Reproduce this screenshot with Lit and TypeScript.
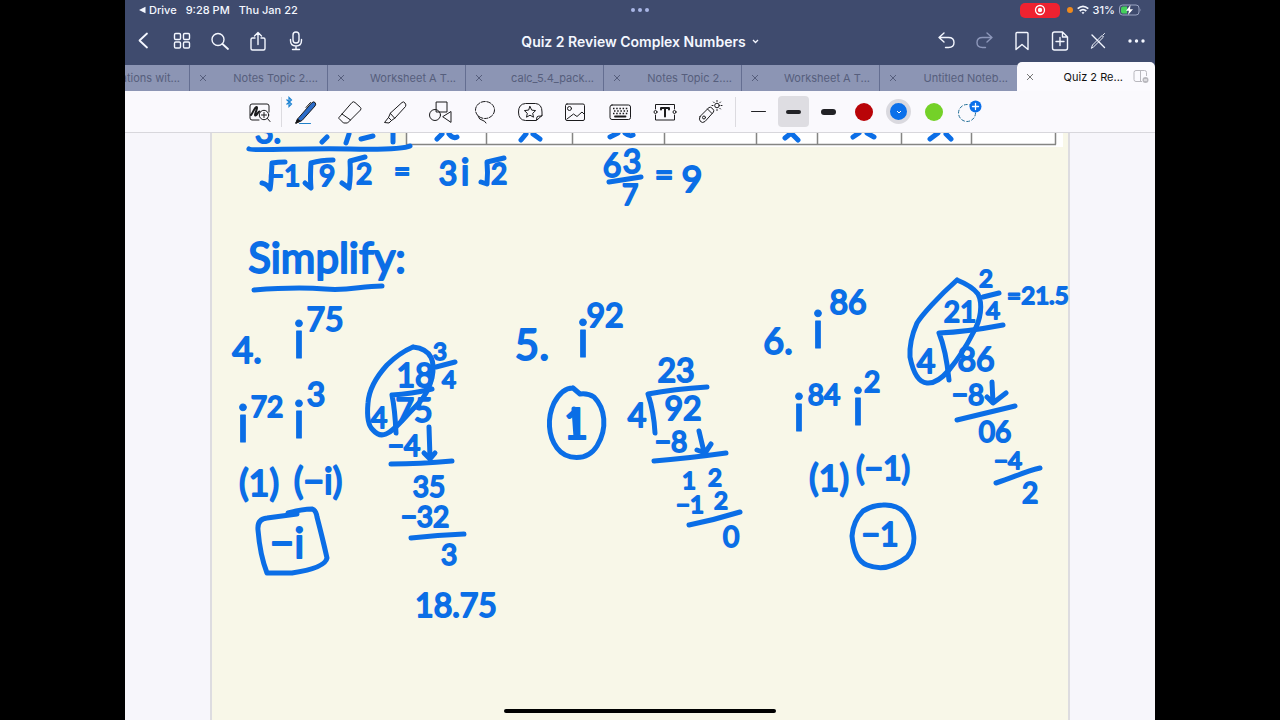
import { LitElement, html, svg, css } from "lit";
import { customElement, state } from "lit/decorators.js";
import { classMap } from "lit/directives/class-map.js";

const icon = (body: unknown, size = 28) => html`
  <svg class="icon" width=${size} height=${size} viewBox="0 0 ${size} ${size}" aria-hidden="true">${body}</svg>
`;

const back = icon(svg`<path d="M17 6.5 9.5 13.5 17 20.5" stroke-width="1.8"/>`);
const grid = icon(svg`
  <rect x="6.5" y="6.5" width="6" height="6" rx="1.2"/><rect x="15.5" y="6.5" width="6" height="6" rx="1.2"/>
  <rect x="6.5" y="15" width="6" height="6" rx="1.2"/><rect x="15.5" y="15" width="6" height="6" rx="1.2"/>`);
const search = icon(svg`<circle cx="12" cy="12.5" r="6"/><path d="M16.5 17 22 22" stroke-width="1.8"/>`);
const share = icon(svg`<path d="M11 11H8.500q-1.5 0-1.5 1.5v9Q7 23 8.500 23h11q1.500 0 1.500-1.500v-9Q21 11 19.500 11H17M14 17.500V5.500M10.500 9L14 5.500 17.500 9"/>`);
const mic = icon(svg`<rect x="11" y="5" width="6" height="11" rx="3"/><path d="M8.500 12.500v1q0 5.500 5.500 5.500t5.500-5.500v-1M14 19v3.500M10.500 22.500h7"/>`);
const undo = icon(svg`<path d="M12 6 7 10.500l5 4.500M7 10.500h9.500q5.500 0 5.500 5t-5.500 5H13.500"/>`);
const redo = icon(svg`<path d="M17 6l5 4.500-5 4.500M22 10.500h-9.500q-5.500 0-5.500 5t5.500 5H15.500"/>`);
const bookmark = icon(svg`<path d="M8 6.500q0-1 1-1h10q1 0 1 1v16l-6-5-6 5z"/>`);
const addPage = icon(svg`<path d="M16.500 5H8.500q-2 0-2 2v14q0 2 2 2h11q2 0 2-2V10zM16.500 5v5h5M14 10.500v8M10 14.500h8"/>`);
const penCross = icon(svg`<path d="M8 8 20.500 20.500"/><path d="M7.500 21l1-3 9.500-9.500 1.500 1.500-9.500 9.500zM19 8l1.500-1.500" stroke-width="1"/>`);
const more = icon(svg`<g fill="currentColor" stroke="none"><circle cx="8" cy="14" r="1.7"/><circle cx="14.500" cy="14" r="1.7"/><circle cx="21" cy="14" r="1.7"/></g>`);

const zoomWindow = icon(svg`
  <path d="M14 22H7q-2 0-2-2V8q0-2 2-2h15q2 0 2 2v6"/>
  <path d="M6 17c2-2 3.500-8 5.500-8s-3 9-1 8.500 2-3.500 4-4" stroke-width="2"/>
  <circle cx="19" cy="17" r="4.700"/><path d="M19 14.500v5M16.500 17h5M22.500 20.500l2.500 3"/>`);
const pen = icon(svg`
  <path d="M7 20.500 20.500 5q2-2 3.500-.5t0 3.500L11 22.500 5 25z" fill="#2b6cc9"/>
  <path d="M19.500 4.500l-4.500 5"/><path d="M5 25l1.500-4 2.500 2z" fill="#111"/>
  <path d="M8.500 25.500h11" stroke="#2080c8"/>`);
const eraser = icon(svg`<path d="M3 19.500 16 4.500q1.500-1.500 3 0l5.500 5q1 1 0 2.500L11.500 25H7.500L3 20.500zM6 16l8.500 6"/>`);
const marker = icon(svg`<path d="M9.500 15 21 4.500q1.500-1.500 3 .5t.5 3.500L14 20zM9.500 15l-2 4.500 3 3L14 20M7.500 19.500l-4 5 4.500.5 2.500-2.500"/>`);
const shapes = icon(svg`<rect x="10.500" y="4" width="10.500" height="10"/><circle cx="9" cy="17" r="5.500"/><path d="M17 18.500 25 13.500v10.500z"/>`);
const lasso = icon(svg`<ellipse cx="14" cy="12" rx="9.500" ry="8.500" stroke-dasharray="4 1.500"/><path d="M7 18q1 4 5 4.500 2 .5 3 2.500"/>`);
const sticker = icon(svg`
  <path d="M20 22.500H9.500Q2.500 22 2.500 14T9.500 5.500h10q6.500.5 6.500 8.500v4q-5 0-5 .5z"/><path d="M21 22l5-4.500"/>
  <path d="M14 8.500l1.700 3.600 3.900.5-2.900 2.700.8 3.900-3.500-2-3.500 2 .8-3.900-2.900-2.700 3.900-.5z"/>`);
const picture = icon(svg`<rect x="4.500" y="6" width="19" height="16.500" rx="1.500"/><circle cx="8.500" cy="10.500" r="2"/><path d="M6 21l6.500-5 3.500 2.500 5-4.500 2.500 2.500"/>`);
const keyboard = icon(svg`
  <rect x="4" y="7" width="20.500" height="14.500" rx="2"/>
  <path d="M7 10.500h15M8 13h14M7 15.500h15" stroke-width="1.500" stroke-dasharray="1.500 1.700" stroke-linecap="butt"/>
  <path d="M9 18.500h10.500" stroke-width="1.800"/>`);
const textBox = icon(svg`
  <path d="M4.500 11V6.500h19V11M4.500 17v5h19v-5"/><circle cx="4.500" cy="14" r="1.500"/><circle cx="23.500" cy="14" r="1.500"/>
  <path d="M10 11.500V10h8v1.500M14 10v8.500" stroke-width="2"/>`);
const laser = icon(svg`
  <path d="M4 18.500 13 9.500q1.500-1 3.500 1t1 3.500L9 23.500q-2.500 2-4.500 0t-.5-5zM11.500 11l4.500 4.500"/><circle cx="8" cy="19.500" r="1.500"/>
  <circle cx="21" cy="7.500" r="2.300"/><path d="M21 2.500v1M21 11.500v1M16 7.500h1M25 7.500h1M17.500 4l.7.700M24.500 4l-.7.700M24.500 11l-.7-.7"/>`);

const tabs = ["Equations wit...", "Notes Topic 2....", "Worksheet A T...", "calc_5.4_pack...", "Notes Topic 2....", "Worksheet A T...", "Untitled Noteb...", "Quiz 2 Re..."];

type Mark = [text: string, centre: number, baseline: number, size: string];

const marks: Mark[] = [
  ["3.", 268, 143, "m"],
  ["−1", 284, 186, "s"], ["9", 327, 186, "s"], ["2", 364, 184, "s"], ["=", 402, 181, "s"],
  ["3", 448, 185, "m"], ["i", 465, 185, "l"], ["2", 499, 184, "s"],
  ["6", 612, 177, "m"], ["3", 632, 173, "m"], ["7", 630, 205, "s"], ["=", 664, 186, "m"], ["9", 692, 192, "l"],
  ["Simplify:", 327, 273, "xl"],
  ["4.", 247, 363, "l"], ["i", 299, 358, "xxl"], ["75", 325, 331, "m"],
  ["i", 243, 442, "xxl"], ["72", 267, 417, "s"], ["i", 299, 438, "xxl"], ["3", 316, 406, "m"],
  ["(1)", 259, 496, "l"], ["(−i)", 318, 494, "l"], ["−i", 287, 558, "xl"],
  ["18", 415, 387, "m"], ["3", 440, 360, "xs"], ["4", 449, 388, "xs"],
  ["4", 379, 428, "s"], ["75", 414, 422, "m"], ["−4", 404, 456, "s"],
  ["35", 429, 497, "s"], ["−32", 425, 527, "s"], ["3", 449, 565, "s"], ["18.75", 456, 617, "m"],
  ["5.", 532, 360, "xl"], ["i", 583, 357, "xxl"], ["92", 605, 327, "m"], ["1", 576, 439, "xl"],
  ["23", 676, 382, "m"], ["4", 637, 427, "m"], ["92", 683, 420, "m"], ["−8", 671, 452, "s"],
  ["1", 689, 489, "xs"], ["2", 715, 486, "xs"], ["−1", 690, 513, "xs"], ["2", 721, 509, "xs"], ["0", 731, 547, "s"],
  ["6.", 778, 354, "l"], ["i", 818, 348, "xxl"], ["86", 848, 314, "m"],
  ["i", 799, 431, "xxl"], ["84", 824, 405, "s"], ["i", 858, 425, "xxl"], ["2", 872, 392, "s"],
  ["(1)", 829, 491, "l"], ["(−1)", 883, 480, "m"], ["−1", 880, 546, "m"],
  ["21", 960, 322, "s"], ["2", 986, 287, "xs"], ["4", 993, 319, "xs"], ["=", 1014, 304, "xs"], ["21.5", 1045, 304, "xs"],
  ["4", 926, 373, "m"], ["86", 976, 371, "m"], ["−8", 968, 405, "s"],
  ["06", 995, 442, "s"], ["−4", 1008, 469, "xs"], ["2", 1030, 503, "s"],
];

// Rules, radicals, loops, arrows and answer frames drawn between the written marks.
const strokes = [
  "M249 149C252 151 300 148 350 149S408 147 410 146",
  "M327 137 322 142M349 134 346 143M361 139 373 136M393 133V142",
  "M437 139l5-5M449 134q4 5 8 3M521 140l5-6M533 134l7 5M610 137l8-4M625 133q5 4 8 2M785 138l5-4M792 134l6 6M853 137l6-4M867 133l7 4M930 139l8-6M946 134l5 5",
  "M262 183q5 1 8 6 1-3 2-26 6-1 13-1", "M305 183q2 2 6 5-1-10 0-25 10-3 22-3",
  "M342 183l7 5q2-12 1-27l15-4", "M481 182l6 2q1-12 0-22l17-4",
  "M609 182 641 177",
  "M254 290C280 288 300 287 325 289S360 286 382 286",
  "M436 367 455 362",
  "M396 433Q395 410 392 395 411 394 432 389",
  "M413 347Q399 353 387 365C377 376 369 388 368 403Q366 424 373 430 379 437 386 434C394 431 402 420 417 405Q428 394 432 378C435 363 433 349 413 347",
  "M429 427 430 458M424 453 430 459 435 453M391 464Q420 464 452 461",
  "M411 538Q438 535 464 534",
  "M297 514 288 513Q302 509 312 509 316 510 317 517 323 540 327 558 325 568 292 573L267 573Q260 555 258 530 257 519 267 518L297 514",
  "M573 388Q562 388 554 403C547 418 548 436 557 448S587 462 597 446C608 428 605 408 594 397Q588 393 580 394L573 388",
  "M574 409 576 437",
  "M655 433Q654 412 648 394 674 389 707 387",
  "M699 431 704 452M697 450 705 453 711 444M654 461C680 459 697 457 726 453",
  "M689 525Q714 520 740 512",
  "M883 505Q873 505 863 511 853 521 852 536 854 560 867 565 887 573 907 557C918 544 914 528 907 516Q899 504 883 505",
  "M983 297 999 293",
  "M949 380Q946 350 939 333 966 332 1003 325",
  "M957 280C938 297 922 315 917 323Q909 341 910 357 915 382 927 383 937 384 949 370 963 353 973 333C981 320 983 304 978 294Q972 286 957 280",
  "M992 382 993 403M987 397 993 403 1006 393M957 420Q986 413 1015 406",
  "M996 483C1015 477 1023 472 1040 468",
];

@customElement("note-page")
class NotePage extends LitElement {
  static styles = css`
    :host { display: block; flex: 1; min-height: 0; background: #f7f6fb; overflow: hidden; }
    .sheet { display: block; width: 100%; height: 100%; }
    .paper { fill: #f8f7e8; }
    .edge { stroke: #dddce0; stroke-width: 2; }
    .cells { fill: #fff; }
    .lines { fill: none; stroke: #858583; stroke-width: 1.5; }
    .strokes { fill: none; stroke: #0b6ee6; stroke-width: 5; stroke-linecap: round; stroke-linejoin: round; }
    .mark {
      font-family: Lato, "Open Sans", sans-serif; fill: #0b6ee6; stroke: #0b6ee6; stroke-width: 2;
      stroke-linejoin: round; text-anchor: middle;
    }
    .xs { font-size: 24px; }
    .s { font-size: 28px; }
    .m { font-size: 32px; }
    .l { font-size: 36px; }
    .xl { font-size: 42px; }
    .xxl { font-size: 52px; stroke-width: 1; }
  `;
  render() {
    return html`
      <svg class="sheet" viewBox="125 133 1030 587" preserveAspectRatio="xMidYMin slice" role="img" aria-label="Handwritten notes">
        <rect class="paper" x="211" y="120" width="857" height="620" />
        <path class="edge" d="M211 120V740M1069 120V740" />
        <rect class="cells" x="406" y="120" width="657" height="27" />
        <path class="lines" d="M406.5 120V144.5M486.5 120V144.5M572.5 120V144.5M664.5 120V144.5M756.5 120V144.5M817.5 120V144.5M901.5 120V144.5M971.5 120V144.5M1055.5 120V144.5M406 144.5H1056" />
        <g class="strokes">${strokes.map((d) => svg`<path d=${d} />`)}</g>
        ${marks.map(([t, x, y, size]) => svg`<text class="mark ${size}" x=${x} y=${y}>${t}</text>`)}
      </svg>
    `;
  }
}

@customElement("app-root")
class AppRoot extends LitElement {
  @state() private tool = 1;
  @state() private activeTab = 7;

  static styles = css`
    :host { display: flex; justify-content: center; height: 100vh; background: #000; font-family: Inter, "Liberation Sans", sans-serif; }
    * { box-sizing: border-box; }
    button { appearance: none; border: 0; padding: 0; margin: 0; background: none; color: inherit; font: inherit; cursor: pointer; display: flex; align-items: center; justify-content: center; }
    .icon { display: block; fill: none; stroke: currentColor; stroke-width: 1.4; stroke-linecap: round; stroke-linejoin: round; flex: none; }
    .screen { position: relative; display: flex; flex-direction: column; height: 100%; aspect-ratio: 103 / 72; max-width: 100%; overflow: hidden; background: #f7f6fb; }
    .top { background: #3f4b6e; color: #f4f7ff; }
    .status { display: grid; grid-template-columns: 1fr auto 1fr; align-items: center; height: 20px; padding: 0 13px; font-size: 11px; font-weight: 500; }
    .left { display: flex; gap: 9px; align-items: center; }
    .back-app { display: flex; gap: 3px; align-items: center; }
    .right { display: flex; gap: 4px; align-items: center; justify-content: flex-end; }
    .dots { color: #a9b6e6; }
    .record { width: 40px; height: 15px; border-radius: 5px; background: #ee2230; color: #fff; }
    .mic-dot { width: 6px; height: 6px; border-radius: 50%; background: #f08a1c; margin-left: 3px; }
    .nav { display: grid; grid-template-columns: 1fr auto 1fr; align-items: center; height: 45px; padding-bottom: 3px; }
    .group { display: flex; }
    .group.end { justify-content: flex-end; }
    .nav-button { width: 38px; height: 40px; }
    .dim { color: #8d97ba; }
    .title { gap: 6px; font-size: 14px; font-weight: 600; }
    .tabs { display: flex; justify-content: flex-end; height: 26px; background: #3f4b6e; }
    .tab { flex: none; display: flex; align-items: center; width: 138px; height: 26px; padding: 0 9px 0 9px; background: #8c95b4; border-left: 1px solid #646e91; color: #565e7c; font-size: 11px; }
    .tab.active { height: 29px; align-self: flex-end; background: #fbfafe; color: #111; border-radius: 5px 5px 0 0; border-left: 0; padding-right: 6px; }
    .close { width: 8px; height: 20px; }
    .tab.active .close { color: #777; }
    .name { flex: 1; justify-content: flex-end; white-space: nowrap; }
    .split { color: #b9b8be; margin-left: 10px; }
    .tools { display: flex; align-items: center; justify-content: center; height: 42px; padding-right: 58px; background: #faf9fd; border-bottom: 1px solid #d8d7dc; color: #1b1b1d; }
    .tools .icon { stroke-width: 1; }
    .tool { position: relative; width: 45px; height: 36px; }
    .bluetooth { position: absolute; left: 3px; top: 2px; color: #1b82d2; }
    .rule { width: 1px; height: 30px; background: #dcdbe0; }
    .rule.gap { margin: 0 5px 0 3px; }
    .option { width: 35px; height: 36px; }
    .picked { width: 31px; height: 31px; margin: 0 2px; border-radius: 4px; background: #dedde2; }
    .line { width: 15px; border-radius: 3px; background: #222226; }
    .thin { height: 1px; }
    .mid { height: 4px; }
    .thick { height: 6px; }
    .swatch { width: 18px; height: 18px; border-radius: 50%; }
    .red { background: #b90408; }
    .green { background: #74d128; }
    .blue { display: flex; align-items: center; justify-content: center; width: 25px; height: 25px; border: 4px solid #dad9df; border-radius: 50%; background: #0b70ea; color: #fff; }
    .home { position: absolute; bottom: 7px; left: 50%; width: 272px; height: 4px; margin-left: -136px; border-radius: 2px; background: #000; }
  `;

  render() {
    const navLeft = [["Back", back], ["Library", grid], ["Search", search], ["Share", share], ["Record audio", mic]];
    const navRight = [["Undo", undo], ["Redo", redo], ["Bookmark", bookmark], ["Add page", addPage], ["Editing mode", penCross], ["More", more]];
    const tools = [["Zoom window", zoomWindow], ["Pen", pen], ["Eraser", eraser], ["Highlighter", marker], ["Shapes", shapes], ["Lasso", lasso], ["Stickers", sticker], ["Image", picture], ["Keyboard", keyboard], ["Text", textBox], ["Laser pointer", laser]];
    return html`
      <div class="screen">
        <header class="top">
          <div class="status">
            <div class="left">
              <span class="back-app"><svg width="8" height="8" viewBox="0 0 8 8" fill="currentColor" aria-hidden="true"><path d="M1 4 7.500.800v6.400z"/></svg>Drive</span>
              <span>9:28 PM</span><span>Thu Jan 22</span>
            </div>
            <svg class="dots" width="18" height="6" viewBox="0 0 18 6" fill="currentColor" aria-hidden="true"><circle cx="2" cy="3" r="2"/><circle cx="9" cy="3" r="2"/><circle cx="16" cy="3" r="2"/></svg>
            <div class="right">
              <button class="record" aria-label="Recording">
                <svg width="12" height="12" viewBox="0 0 12 12" aria-hidden="true"><circle cx="6" cy="6" r="4.500" fill="none" stroke="#fff" stroke-width="1.300"/><circle cx="6" cy="6" r="2.200" fill="#fff"/></svg>
              </button>
              <span class="mic-dot"></span>
              <svg width="12" height="10" viewBox="0 0 12 10" fill="none" stroke="currentColor" stroke-width="1.700" aria-hidden="true"><path d="M.7 3.700q5.300-4.800 10.600 0M2.700 6q3.300-2.800 6.600 0"/><path d="M4.500 7.500q1.500-1.200 3 0L6 9.300z" fill="currentColor" stroke="none"/></svg>
              <span>31%</span>
              <svg width="23" height="12" viewBox="0 0 23 12" aria-hidden="true"><rect x=".5" y="1" width="19.500" height="10" rx="3" fill="none" stroke="#9ba5c3"/><path d="M4 2.500h4v7H4q-2 0-2-2v-3q0-2 2-2z" fill="#44d05c"/><path d="M21.500 4.500q1.300 1.500 0 3z" fill="#9ba5c3"/><path d="M11.500 1 7 6.700h3L9 11l5-5.700h-3z" fill="#fff"/></svg>
            </div>
          </div>
          <nav class="nav">
            <div class="group">${navLeft.map(([n, i]) => html`<button class="nav-button" aria-label=${n}>${i}</button>`)}</div>
            <button class="title">Quiz 2 Review Complex Numbers
              <svg width="7" height="5" viewBox="0 0 7 5" fill="none" stroke="currentColor" stroke-width="1.300" aria-hidden="true"><path d="M1 1l2.500 2.500L6 1"/></svg>
            </button>
            <div class="group end">${navRight.map(([n, i]) => html`<button class=${classMap({ "nav-button": true, dim: n === "Redo" })} aria-label=${n}>${i}</button>`)}</div>
          </nav>
        </header>
        <div class="tabs">
          ${tabs.map((name, i) => html`
            <div class=${classMap({ tab: true, active: i === this.activeTab })}>
              <button class="close" aria-label="Close tab">
                <svg width="8" height="8" viewBox="0 0 8 8" stroke="currentColor" aria-hidden="true"><path d="M1 1l6 6M7 1 1 7"/></svg>
              </button>
              <button class="name" @click=${() => (this.activeTab = i)}>${name}</button>
              ${i === 7 ? html`<button class="split" aria-label="Split view">
                <svg width="16" height="14" viewBox="0 0 16 14" fill="none" stroke="currentColor" aria-hidden="true"><path d="M9 11.500H3q-2 0-2-2v-7q0-2 2-2h8.500q2 0 2 2V6M7.500.500v11"/><circle cx="12.500" cy="10" r="3" fill="currentColor" stroke="none"/><path d="M11 10h3" stroke="#fff"/></svg>
              </button>` : ""}
            </div>`)}
        </div>
        <div class="tools" role="toolbar" aria-label="Drawing tools">
          ${tools.map(([n, i], k) => html`
            <button class="tool" aria-label=${n} aria-pressed=${k === this.tool} @click=${() => (this.tool = k)}>
              ${i}${k === 1 ? html`<svg class="bluetooth" width="8" height="12" viewBox="0 0 8 12" fill="none" stroke="currentColor" stroke-width="1.200" aria-hidden="true"><path d="M1.500 3.500 6.500 8 4 10.500v-9L6.500 4l-5 4.500"/></svg>` : ""}
            </button>${k === 0 ? html`<span class="rule"></span>` : ""}`)}
          <span class="rule gap"></span>
          <button class="option" aria-label="Thin stroke"><span class="line thin"></span></button>
          <button class="picked" aria-label="Medium stroke" aria-pressed="true"><span class="line mid"></span></button>
          <button class="option" aria-label="Thick stroke"><span class="line thick"></span></button>
          <button class="option" aria-label="Red"><span class="swatch red"></span></button>
          <button class="option" aria-label="Blue" aria-pressed="true"><span class="blue"><svg width="6" height="4" viewBox="0 0 6 4" fill="none" stroke="currentColor" aria-hidden="true"><path d="M1 1l2 2 2-2"/></svg></span></button>
          <button class="option" aria-label="Green"><span class="swatch green"></span></button>
          <button class="option" aria-label="Add colour">
            ${icon(svg`<circle cx="12" cy="15" r="8.500" stroke="#247098" stroke-dasharray="3 2.300"/><circle cx="20.500" cy="8.500" r="6" fill="#0b70ea" stroke="none"/><path d="M20.500 5.500v6M17.500 8.500h6" stroke="#fff" stroke-width="1.300"/>`)}
          </button>
        </div>
        <note-page></note-page>
        <div class="home"></div>
      </div>
    `;
  }
}
